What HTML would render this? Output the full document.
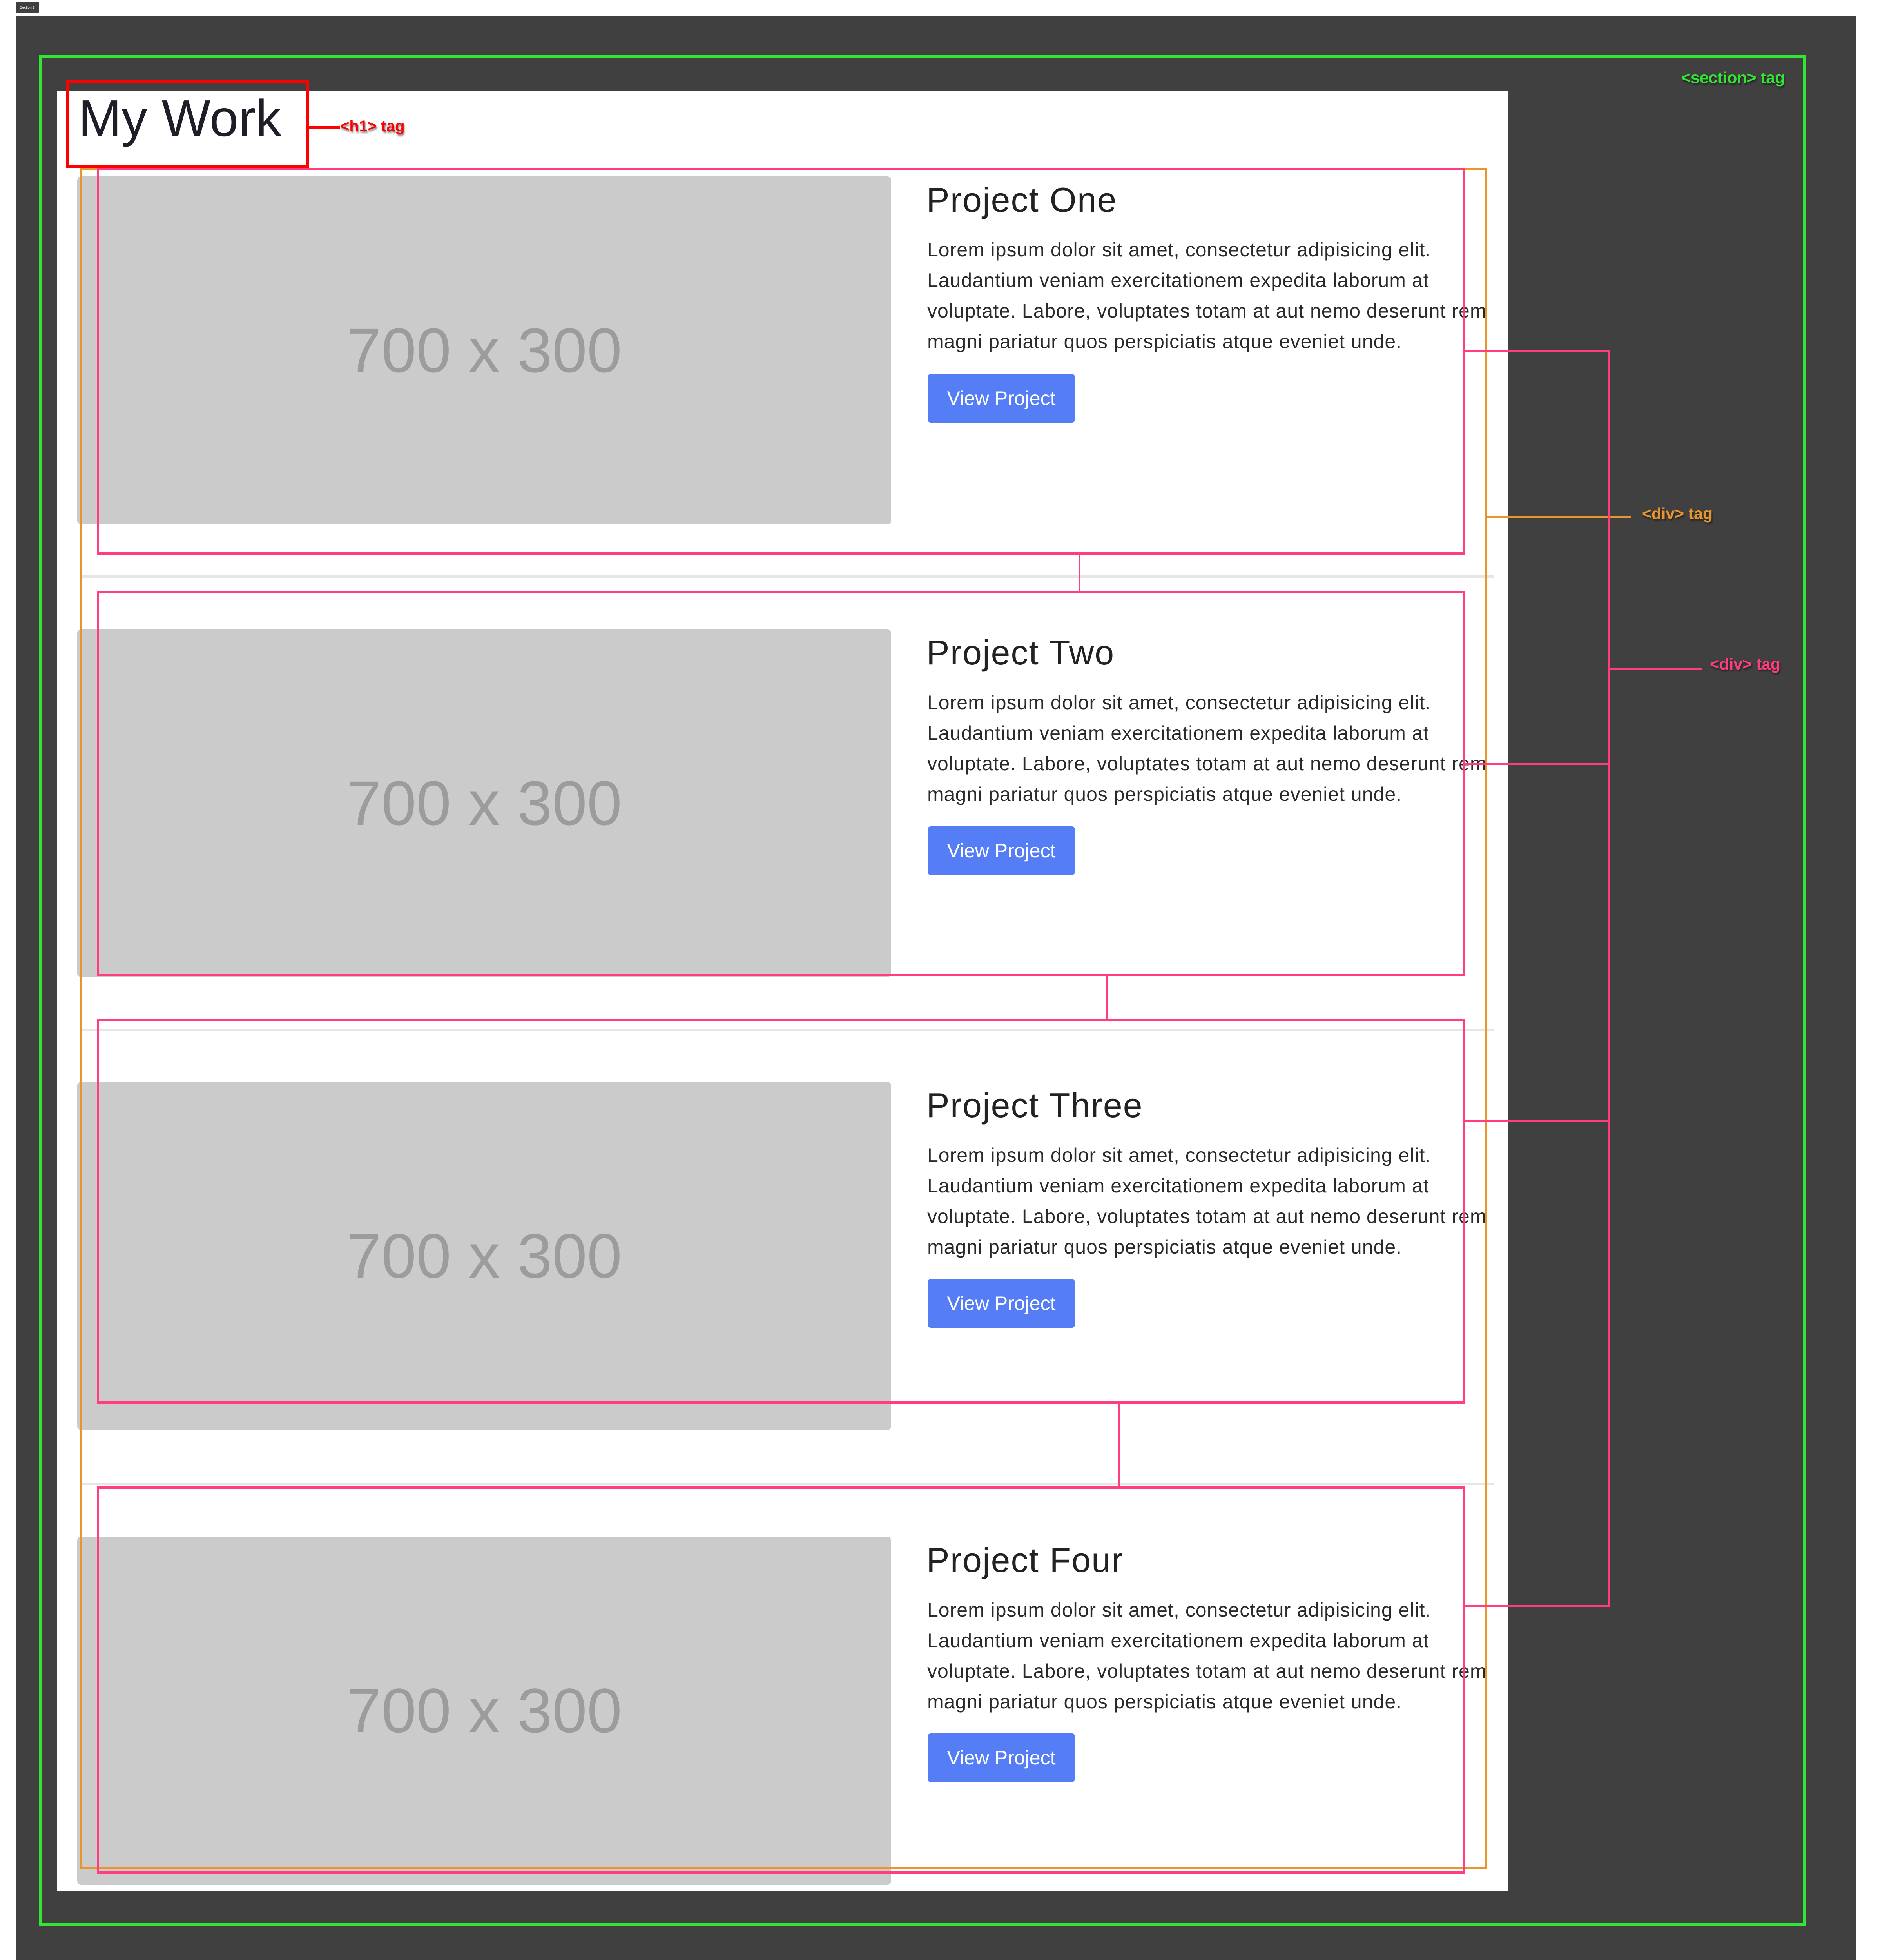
<!DOCTYPE html>
<html><head><meta charset="utf-8">
<style>
*{margin:0;padding:0;box-sizing:border-box}
html,body{width:4792px;height:5056px;overflow:hidden}
body{background:#fff;position:relative;font-family:"Liberation Sans",sans-serif}
.a{position:absolute}
.img{position:absolute;left:197px;width:2077px;height:888px;background:#cbcbcb;border-radius:10px;color:#9c9c9c;font-size:160px;display:flex;align-items:center;justify-content:center}
.t{position:absolute;left:2364px;font-size:88px;letter-spacing:2px;color:#222;line-height:1;white-space:nowrap}
.p{position:absolute;left:2366px;font-size:50px;letter-spacing:1px;color:#2a2a2a;line-height:78px;white-space:nowrap}
.b{position:absolute;left:2367px;width:376px;height:124px;background:#557df6;border-radius:8px;color:#fff;font-size:50px;display:flex;align-items:center;justify-content:center}
.pk{position:absolute;border:6px solid #ff3d80}
.hr{position:absolute;left:203px;width:3608px;height:6px;background:#e6e6e6}
.lbl{position:absolute;font-weight:bold;font-size:41px;white-space:nowrap;line-height:1;text-shadow:2px 4px 4px rgba(0,0,0,.5)}
</style></head><body>
<div class="a" style="left:40px;top:4px;width:59px;height:30px;background:#404040;border-radius:3px;color:#fff;font-size:9px;line-height:30px;text-align:center">Section 1</div>
<div class="a" style="left:40px;top:40px;width:4697px;height:4961px;background:#404040"></div>
<div class="a" style="left:100px;top:140px;width:4508px;height:4772px;border:7px solid #33e633"></div>
<div class="lbl" style="left:4290px;top:178px;color:#33e633">&lt;section&gt; tag</div>
<div class="a" style="left:145px;top:232px;width:3703px;height:4592px;background:#fff"></div>

<div class="a" style="left:200px;top:236px;font-size:132px;color:#1e1e28;line-height:1">My Work</div>
<div class="a" style="left:169px;top:204px;width:620px;height:224px;border:7px solid #ff0000"></div>
<div class="a" style="left:787px;top:322px;width:80px;height:6px;background:#ff0000"></div>
<div class="lbl" style="left:868px;top:302px;color:#ff0000;font-size:40px">&lt;h1&gt; tag</div>

<div class="img" style="top:450px">700 x 300</div>
<div class="img" style="top:1605px">700 x 300</div>
<div class="img" style="top:2760px">700 x 300</div>
<div class="img" style="top:3920px">700 x 300</div>

<div class="hr" style="top:1468px"></div>
<div class="hr" style="top:2624px"></div>
<div class="hr" style="top:3783px"></div>

<div class="t" style="top:466px">Project One</div>
<div class="p" style="top:598px">Lorem ipsum dolor sit amet, consectetur adipisicing elit.<br>Laudantium veniam exercitationem expedita laborum at<br>voluptate. Labore, voluptates totam at aut nemo deserunt rem<br>magni pariatur quos perspiciatis atque eveniet unde.</div>
<div class="b" style="top:954px">View Project</div>

<div class="t" style="top:1621px">Project Two</div>
<div class="p" style="top:1753px">Lorem ipsum dolor sit amet, consectetur adipisicing elit.<br>Laudantium veniam exercitationem expedita laborum at<br>voluptate. Labore, voluptates totam at aut nemo deserunt rem<br>magni pariatur quos perspiciatis atque eveniet unde.</div>
<div class="b" style="top:2108px">View Project</div>

<div class="t" style="top:2776px">Project Three</div>
<div class="p" style="top:2908px">Lorem ipsum dolor sit amet, consectetur adipisicing elit.<br>Laudantium veniam exercitationem expedita laborum at<br>voluptate. Labore, voluptates totam at aut nemo deserunt rem<br>magni pariatur quos perspiciatis atque eveniet unde.</div>
<div class="b" style="top:3263px">View Project</div>

<div class="t" style="top:3936px">Project Four</div>
<div class="p" style="top:4068px">Lorem ipsum dolor sit amet, consectetur adipisicing elit.<br>Laudantium veniam exercitationem expedita laborum at<br>voluptate. Labore, voluptates totam at aut nemo deserunt rem<br>magni pariatur quos perspiciatis atque eveniet unde.</div>
<div class="b" style="top:4422px">View Project</div>

<div class="a" style="left:203px;top:428px;width:3592px;height:4340px;border:5px solid #e8952e"></div>
<div class="a" style="left:3790px;top:1316px;width:372px;height:6px;background:#e8952e"></div>
<div class="lbl" style="left:4190px;top:1290px;color:#e8952e">&lt;div&gt; tag</div>

<div class="pk" style="left:247px;top:428px;width:3492px;height:987px"></div>
<div class="pk" style="left:247px;top:1508px;width:3492px;height:983px"></div>
<div class="pk" style="left:247px;top:2599px;width:3492px;height:982px"></div>
<div class="pk" style="left:247px;top:3792px;width:3492px;height:988px"></div>
<div class="a" style="left:2752px;top:1412px;width:5px;height:98px;background:#ff3d80"></div>
<div class="a" style="left:2823px;top:2488px;width:5px;height:113px;background:#ff3d80"></div>
<div class="a" style="left:2852px;top:3578px;width:5px;height:216px;background:#ff3d80"></div>

<div class="a" style="left:3736px;top:893px;width:373px;height:5px;background:#ff3d80"></div>
<div class="a" style="left:3736px;top:1947px;width:373px;height:5px;background:#ff3d80"></div>
<div class="a" style="left:3736px;top:2857px;width:373px;height:5px;background:#ff3d80"></div>
<div class="a" style="left:3736px;top:4094px;width:373px;height:5px;background:#ff3d80"></div>
<div class="a" style="left:4104px;top:893px;width:5px;height:3206px;background:#ff3d80"></div>
<div class="a" style="left:4104px;top:1703px;width:238px;height:7px;background:#ff3d80"></div>
<div class="lbl" style="left:4363px;top:1674px;color:#ff3d80">&lt;div&gt; tag</div>
</body></html>
